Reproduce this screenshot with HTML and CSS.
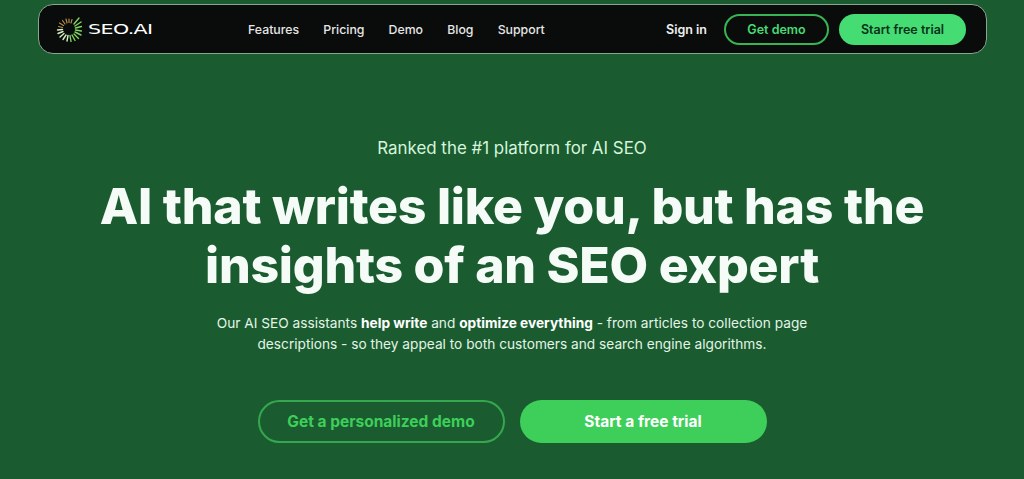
FILE: index.html
```html
<!DOCTYPE html>
<html lang="en">
<head>
    <meta charset="UTF-8">
    <meta name="viewport" content="width=device-width, initial-scale=1.0">
    <title>SEO.AI</title>
    <link rel="stylesheet" href="styles.css">
</head>
<body>
    <!-- Top navigation -->
    <header class="navbar">
        <a class="logo" href="#">
            <svg class="logo-icon" width="26" height="26" viewBox="-13 -13 26 26" fill="none" stroke-linecap="round">
                <g stroke="#7fd65f" stroke-width="1.4">
                    <line x1="5" y1="-5" x2="10" y2="-11"/>
                    <line x1="6" y1="-3" x2="12" y2="-7"/>
                    <line x1="6.5" y1="-1" x2="12.5" y2="-2.5"/>
                    <line x1="6.5" y1="1" x2="12.5" y2="2"/>
                    <line x1="6" y1="3" x2="12" y2="6"/>
                    <line x1="5" y1="5" x2="9.5" y2="9.5"/>
                    <line x1="3" y1="6" x2="6" y2="11.5"/>
                    <line x1="1" y1="6.5" x2="2" y2="12.5"/>
                </g>
                <g stroke="#d8edc4" stroke-width="1.4">
                    <line x1="-1" y1="6.5" x2="-2" y2="12"/>
                    <line x1="-3" y1="6" x2="-6" y2="10.5"/>
                    <line x1="-5" y1="4.5" x2="-9" y2="8"/>
                    <line x1="-6" y1="2.5" x2="-11" y2="4.5"/>
                    <line x1="-6.5" y1="0.5" x2="-11.5" y2="1"/>
                </g>
                <g stroke="#b58a4a" stroke-width="1.2">
                    <line x1="-6.5" y1="-1.5" x2="-10.5" y2="-2.5"/>
                    <line x1="-5.5" y1="-3.5" x2="-9.5" y2="-6"/>
                    <line x1="-4" y1="-5" x2="-6.5" y2="-8.5"/>
                    <line x1="-2" y1="-6" x2="-3" y2="-10"/>
                    <line x1="0" y1="-6.5" x2="0" y2="-10"/>
                    <line x1="2" y1="-6" x2="3" y2="-9.5"/>
                </g>
            </svg>
            <span class="logo-text">SEO.AI</span>
        </a>

        <nav class="nav-links">
            <a href="#">Features</a>
            <a href="#">Pricing</a>
            <a href="#">Demo</a>
            <a href="#">Blog</a>
            <a href="#">Support</a>
        </nav>

        <div class="nav-actions">
            <a class="sign-in" href="#">Sign in</a>
            <a class="btn-small btn-small-outline" href="#">Get demo</a>
            <a class="btn-small btn-small-solid" href="#">Start free trial</a>
        </div>
    </header>

    <!-- Hero -->
    <main class="hero">
        <p class="hero-rank">Ranked the #1 platform for AI SEO</p>
        <h1>AI that writes like you, but has the insights of an SEO expert</h1>
        <p class="hero-text">Our AI SEO assistants <strong>help write</strong> and <strong>optimize everything</strong> - from articles to collection page descriptions - so they appeal to both customers and search engine algorithms.</p>
        <div class="hero-buttons">
            <a class="btn btn-outline" href="#">Get a personalized demo</a>
            <a class="btn btn-solid" href="#">Start a free trial</a>
        </div>
    </main>
</body>
</html>
```

FILE: styles.css
```css
:root {
    --background-color: #1a5c30;
    --nav-color: #0a0c0b;
    --accent-color: #3ecf5a;
    --accent-light: #45dc74;
    --text-color: #eefaf0;
}

* {
    box-sizing: border-box;
}

html,
body {
    height: 100%;
}

body {
    margin: 0;
    padding-top: 4px;
    background-color: var(--background-color);
    font-family: 'Inter', sans-serif;
    color: var(--text-color);
    overflow: hidden;
}

a {
    text-decoration: none;
    color: inherit;
}

/* Top navigation */
.navbar {
    display: flex;
    align-items: center;
    width: 949px;
    height: 50px;
    margin-left: 38px;
    padding: 0 20px 0 17px;
    background-color: var(--nav-color);
    border: 1px solid #8aa792;
    border-radius: 15px;
}

.logo {
    display: flex;
    align-items: center;
    gap: 6px;
    width: 192px;
}

.logo-text {
    font-family: 'DejaVu Sans', sans-serif;
    font-size: 14px;
    letter-spacing: -0.4px;
    color: #ffffff;
    transform: scaleX(1.47);
    transform-origin: left center;
}

.nav-links {
    display: flex;
    gap: 24.2px;
    font-size: 12.3px;
    font-weight: 500;
    color: #e6e6e6;
}

.nav-actions {
    display: flex;
    align-items: center;
    margin-left: auto;
}

.sign-in {
    margin-right: 17px;
    font-size: 12.5px;
    font-weight: 600;
    color: #f0f0f0;
}

.btn-small {
    display: flex;
    justify-content: center;
    align-items: center;
    height: 31px;
    border-radius: 16px;
    font-size: 12.5px;
    font-weight: 600;
}

.btn-small-outline {
    width: 105px;
    margin-right: 10px;
    border: 2px solid #37b552;
    color: var(--accent-light);
}

.btn-small-solid {
    width: 127px;
    background-color: var(--accent-light);
    color: #08321a;
}

/* Hero */
.hero {
    display: flex;
    flex-direction: column;
    align-items: center;
    padding-top: 84px;
    text-align: center;
}

.hero-rank {
    margin: 0;
    font-size: 16.9px;
    line-height: 20px;
    color: #d6f5dc;
}

h1 {
    width: 860px;
    margin: 19px 0 0;
    font-size: 50px;
    font-weight: 800;
    line-height: 59px;
    letter-spacing: -0.25px;
    color: #f5fbf6;
}

.hero-text {
    width: 620px;
    margin: 18px 0 0;
    font-size: 13.7px;
    line-height: 21px;
    color: #e3f5e6;
}

.hero-text strong {
    font-weight: 700;
    color: #ffffff;
}

.hero-buttons {
    display: flex;
    gap: 15px;
    margin-top: 45px;
}

.btn {
    display: flex;
    justify-content: center;
    align-items: center;
    width: 247px;
    height: 43px;
    border-radius: 22px;
    font-size: 15.5px;
    font-weight: 700;
}

.btn-outline {
    border: 2px solid #35a84f;
    color: var(--accent-color);
}

.btn-solid {
    background-color: var(--accent-color);
    color: #ffffff;
}
```
